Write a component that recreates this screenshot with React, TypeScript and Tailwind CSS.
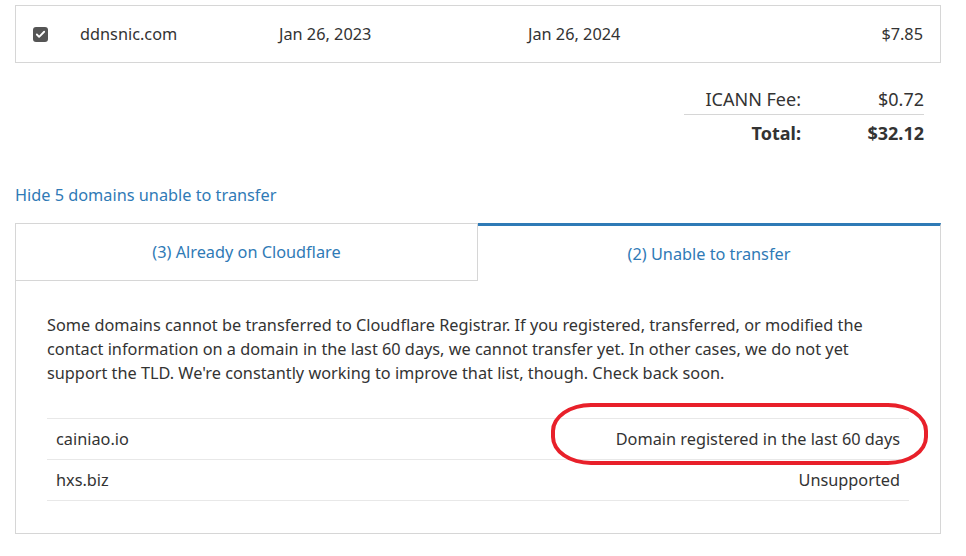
import { Check } from 'lucide-react'

interface Blocked {
  domain: string
  reason: string
}

const blocked: Blocked[] = [
  { domain: 'cainiao.io', reason: 'Domain registered in the last 60 days' },
  { domain: 'hxs.biz', reason: 'Unsupported' },
]

function App(): React.JSX.Element {
  return (
    <div className="w-[966px] h-[556px] overflow-hidden bg-white text-[#333] text-[16.3px] leading-[24px] font-['Noto_Sans',sans-serif]">
      <div className="ml-[15px] w-[926px]">
        {/* Domain row (table continues above) */}
        <div className="mt-[5px] h-[58px] border border-[#d6d6d6] flex items-center">
          <div className="w-[64px] pl-[17px]">
            <span className="w-[15px] h-[15px] rounded-[3px] bg-[#555] flex items-center justify-center">
              <Check size={11} strokeWidth={4} className="text-white" />
            </span>
          </div>
          <div className="w-[199px]">ddnsnic.com</div>
          <div className="w-[249px]">Jan 26, 2023</div>
          <div className="w-[200px]">Jan 26, 2024</div>
          <div className="flex-1 text-right pr-[17px]">$7.85</div>
        </div>

        {/* Totals */}
        <div className="mt-[20px] flex justify-end pr-[17px]">
          <div className="w-[240px]">
            <div className="flex h-[32px] items-center border-b border-[#d6d6d6] text-[18px]">
              <span className="w-[117px] text-right">ICANN Fee:</span>
              <span className="flex-1 text-right">$0.72</span>
            </div>
            <div className="flex h-[36px] items-center text-[18px] font-bold">
              <span className="w-[117px] text-right">Total:</span>
              <span className="flex-1 text-right">$32.12</span>
            </div>
          </div>
        </div>

        <a className="block mt-[32px] text-[#2f7ab6]">Hide 5 domains unable to transfer</a>

        {/* Tabs */}
        <div className="mt-[16px] flex">
          <div className="w-[463px] h-[58px] border border-[#d6d6d6] flex items-center justify-center text-[#2f7ab6]">
            (3) Already on Cloudflare
          </div>
          <div className="flex-1 h-[58px] border-t-[3px] border-t-[#2f7ab6] border-r border-r-[#d6d6d6] flex items-center justify-center text-[#2f7ab6]">
            (2) Unable to transfer
          </div>
        </div>

        <div className="border-x border-b border-[#d6d6d6] px-[31px] pt-[32px] pb-[32px]">
          <p>
            Some domains cannot be transferred to Cloudflare Registrar. If you registered, transferred, or modified the
            <br />
            contact information on a domain in the last 60 days, we cannot transfer yet. In other cases, we do not yet
            <br />
            support the TLD. We're constantly working to improve that list, though. Check back soon.
          </p>
          <div className="relative mt-[33px] border-t border-[#e8e8e8]">
            {blocked.map((b) => (
              <div key={b.domain} className="h-[41px] flex items-center justify-between px-[9px] border-b border-[#e8e8e8]">
                <span>{b.domain}</span>
                <span>{b.reason}</span>
              </div>
            ))}
            {/* annotation */}
            <div className="absolute left-[504px] top-[-16px] w-[377px] h-[62px] border-[4px] border-[#e8202a] rounded-[40px/28px] pointer-events-none" />
          </div>
        </div>
      </div>
    </div>
  )
}

export default App
